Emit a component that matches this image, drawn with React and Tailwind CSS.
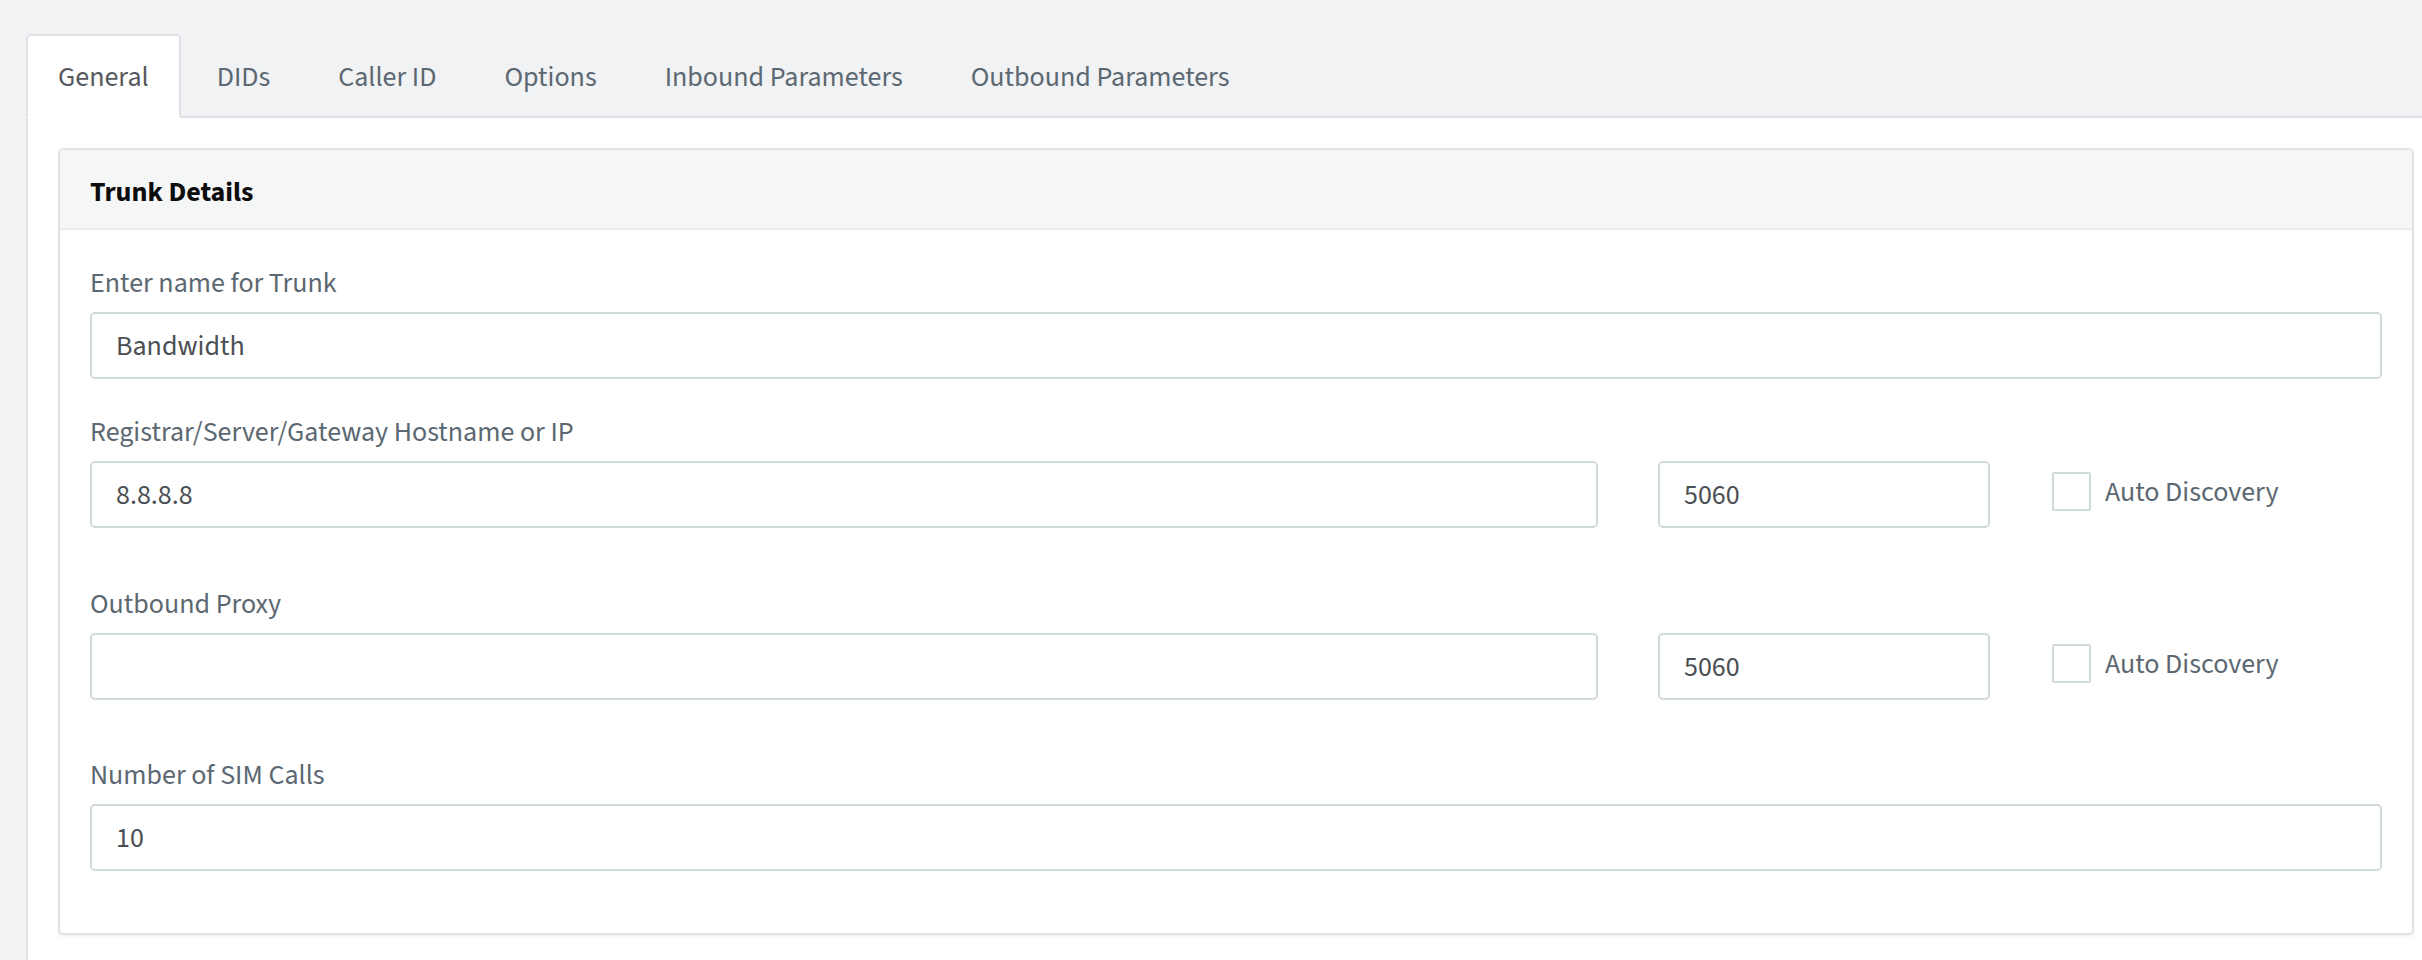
import React from "react";

const tabs = ["General", "DIDs", "Caller ID", "Options", "Inbound Parameters", "Outbound Parameters"];

const Label = ({ children }) => (
  <label className="block mb-2 leading-[42px] text-[#5c6871]">{children}</label>
);

const TextInput = ({ value = "" }) => (
  <input
    defaultValue={value}
    className="block w-full h-[67px] px-[24px] bg-white border-2 border-[#d0dadc] rounded-[5px] text-[#4b4f53] outline-none"
  />
);

const PortRow = ({ host, port }) => (
  <div className="grid grid-cols-12 -mx-[30px]">
    <div className="col-span-8 px-[30px]">
      <TextInput value={host} />
    </div>
    <div className="col-span-2 px-[30px]">
      <TextInput value={port} />
    </div>
    <div className="col-span-2 pl-[32px] pb-[6px] flex items-center gap-[14px]">
      <span className="w-[39px] h-[39px] border-2 border-[#d0dadc] rounded-[2px] bg-white" />
      <span className="text-[#5c6871] leading-[42px]">Auto Discovery</span>
    </div>
  </div>
);

export default function App() {
  return (
    <div
      className="w-full min-h-screen overflow-hidden bg-[#f1f2f4] text-[28px]"
      style={{ fontFamily: '"Source Sans 3", Lato, "Liberation Sans", sans-serif' }}
    >
      <div className="w-[2444px] min-h-screen flex flex-col pl-[26px] pt-[34px]">
        {/* tabs */}
        <ul className="flex gap-[4px] border-b-2 border-[#dee2e6]">
          {tabs.map((t, i) => (
            <li
              key={t}
              className={
                i === 0
                  ? "-mb-[2px] px-[30px] pt-[20px] pb-[18px] leading-[42px] border-2 border-[#dee2e6] border-b-white bg-white rounded-t-[5px] text-[#55595d]"
                  : "-mb-[2px] px-[30px] pt-[20px] pb-[18px] leading-[42px] border-2 border-transparent text-[#5c6871]"
              }
            >
              {t}
            </li>
          ))}
        </ul>

        {/* tab content */}
        <div className="flex-1 bg-white border-l-2 border-[#dee2e6] px-[30px] pt-[30px] pb-[30px]">
          <div className="border-2 border-[#dfe3e5] rounded-[5px] bg-white shadow-[0_2px_3px_rgba(0,0,0,0.05)]">
            <div className="bg-[#f5f6f6] border-b-2 border-[#e8ecec] px-[30px] pt-[21px] pb-[15px] leading-[42px] font-bold text-[#0d0d0d] rounded-t-[4px]">
              Trunk Details
            </div>
            <div className="px-[30px] pt-[32px] pb-[62px]">
              <div className="mb-[32px]">
                <Label>Enter name for Trunk</Label>
                <TextInput value="Bandwidth" />
              </div>
              <div className="mb-[55px]">
                <Label>Registrar/Server/Gateway Hostname or IP</Label>
                <PortRow host="8.8.8.8" port="5060" />
              </div>
              <div className="mb-[54px]">
                <Label>Outbound Proxy</Label>
                <PortRow host="" port="5060" />
              </div>
              <div>
                <Label>Number of SIM Calls</Label>
                <TextInput value="10" />
              </div>
            </div>
          </div>
        </div>
      </div>
    </div>
  );
}
